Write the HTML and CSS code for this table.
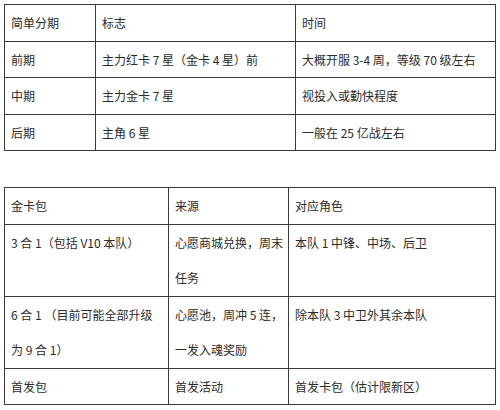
FILE: index.html
```html
<!DOCTYPE html>
<html lang="zh">
<head>
<meta charset="utf-8">
<link rel="stylesheet" href="styles.css">
</head>
<body>
<table class="grid t1">
  <colgroup><col class="c1a"><col class="c1b"><col class="c1c"></colgroup>
  <tr><td>简单分期</td><td>标志</td><td>时间</td></tr>
  <tr><td>前期</td><td>主力红卡 7 星（金卡 4 星）前</td><td>大概开服 3-4 周，等级 70 级左右</td></tr>
  <tr><td>中期</td><td>主力金卡 7 星</td><td>视投入或勤快程度</td></tr>
  <tr><td>后期</td><td>主角 6 星</td><td>一般在 25 亿战左右</td></tr>
</table>
<table class="grid t2">
  <colgroup><col class="c2a"><col class="c2b"><col class="c2c"></colgroup>
  <tr><td>金卡包</td><td>来源</td><td>对应角色</td></tr>
  <tr><td>3 合 1（包括 V10 本队）<br>&nbsp;</td><td>心愿商城兑换，周末<br>任务</td><td>本队 1 中锋、中场、后卫<br>&nbsp;</td></tr>
  <tr><td>6 合 1 （目前可能全部升级<br>为 9 合 1）</td><td>心愿池，周冲 5 连，<br>一发入魂奖励</td><td>除本队 3 中卫外其余本队<br>&nbsp;</td></tr>
  <tr><td>首发包</td><td>首发活动</td><td>首发卡包（估计限新区）</td></tr>
</table>
</body>
</html>
```
FILE: styles.css
```css
html, body {
  margin: 0;
  background: #fff;
}
body {
  padding: 4px 0 0 4px;
  font-family: "Noto Sans CJK SC", "Noto Sans", sans-serif;
  font-size: 12px;
  color: #2b2b2b;
}
.grid {
  border-collapse: collapse;
  table-layout: fixed;
  width: 491px;
}
.grid td {
  border: 1px solid #3a3a3a;
  padding: 0 4px 0 6px;
  line-height: 35.5px;
  vertical-align: top;
  white-space: nowrap;
  overflow: hidden;
}
.t2 {
  margin-top: 36px;
}
.c1a { width: 91px; }
.c1b { width: 200px; }
.c1c { width: 200px; }
.c2a { width: 164px; }
.c2b { width: 120px; }
.c2c { width: 207px; }
```
